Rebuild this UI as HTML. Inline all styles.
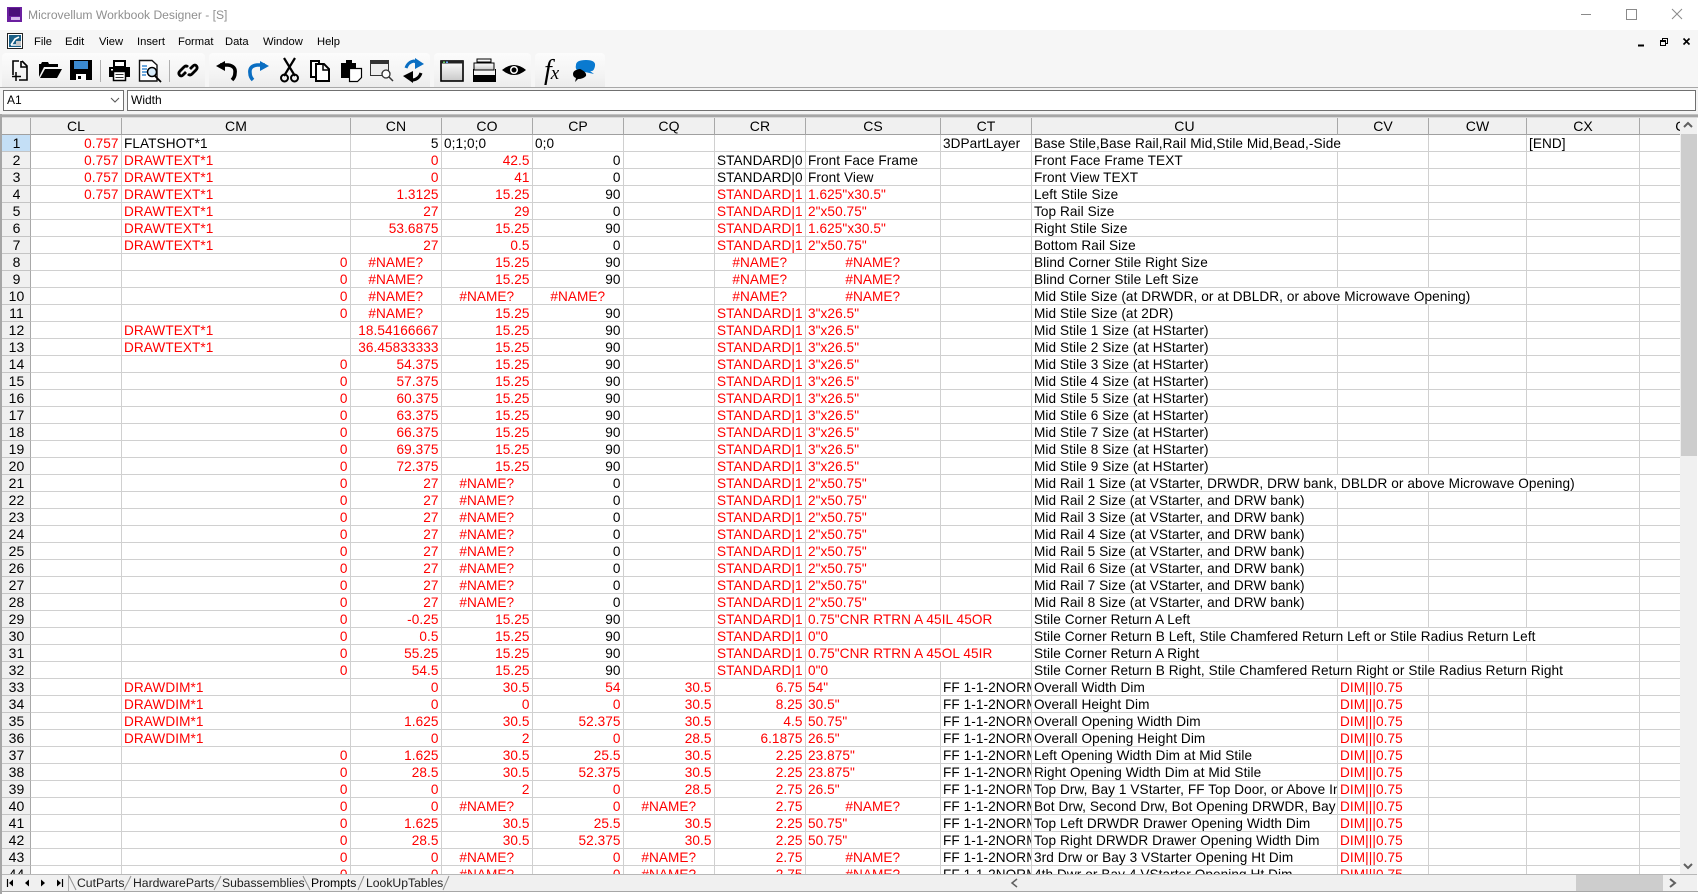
<!DOCTYPE html>
<html><head><meta charset="utf-8"><title>Microvellum Workbook Designer</title>
<style>
*{box-sizing:border-box}
html,body{margin:0;padding:0;width:1698px;height:894px;overflow:hidden;background:#fff;font-family:"Liberation Sans",Arial,sans-serif;color:#000}
.abs{position:absolute}
#title{left:28px;top:7px;font-size:12.1px;color:#8f8f8f;white-space:nowrap;line-height:16px}
#chrome{left:0;top:30px;width:1698px;height:58px;background:#f6f6f6;border-bottom:1px solid #a8a8a8}
.grp{position:absolute;top:23px;height:34px;border-radius:4px 4px 0 0;background:linear-gradient(#fcfcfc,#f4f4f4 60%,#ececec)}
.m{position:absolute;top:34px;font-size:11.2px;line-height:16px;color:#000;white-space:nowrap}
#fbar{left:0;top:88px;width:1698px;height:26px;background:#f4f4f4}
.box{position:absolute;top:90px;height:21px;background:#fff;border:1px solid #707070;font-size:12px;line-height:19px;padding-left:3px}
#gridwrap{left:2px;top:118px;width:1678px;height:756px;overflow:hidden;background:#fff}
#topline{left:0;top:114px;width:1698px;height:4px;background:#a6a6a6;border-bottom:1px solid #d8d8d8;border-top:1px solid #c0c0c0}
#leftline{left:0;top:114px;width:2px;height:780px;background:#a6a6a6}
table{border-collapse:separate;border-spacing:0;table-layout:fixed;width:1729px}
td,th{height:17px;padding:1px 2.5px 0 2px;border-right:1px solid #d0d0d0;border-bottom:1px solid #d0d0d0;font-size:13.6px;letter-spacing:.08px;font-weight:normal;line-height:15px;white-space:nowrap;overflow:hidden;text-align:left;color:#000}
th{background:#f0f0f0;border-right:1px solid #a8a8a8;border-bottom:1px solid #a0a0a0;text-align:center;font-size:14px;padding:0 3px;line-height:16px}
td:first-child{background:#f0f0f0;border-right:1px solid #a8a8a8;border-bottom:1px solid #c4c4c4;text-align:center;font-size:14px;padding:1px 0 0 1px}
td.s:first-child{background:#c4dff6}
td.r{color:#f00}
td.a{color:#f00;text-align:right}
td.c{color:#f00;text-align:center}
td.k{text-align:right}
#vbar{left:1680px;top:118px;width:17px;height:756px;background:#f0f0f0}
#vthumb{left:1681px;top:134px;width:16px;height:322px;background:#cdcdcd}
#hbar{left:2px;top:874px;width:1695px;height:17px;background:#f0f0f0;border-top:1px solid #b8b8b8}
#hthumb{left:1576px;top:875px;width:87px;height:16px;background:#cdcdcd}
#botline{left:0;top:891px;width:1698px;height:1px;background:#a6a6a6}
.t{position:absolute;top:875px;font-size:12.2px;line-height:16px;white-space:nowrap;color:#222}
</style></head><body>

<div class="abs" id="title">Microvellum Workbook Designer - [S]</div>
<div class="abs" id="chrome">
<div class="grp" style="left:2px;width:203px"></div>
<div class="grp" style="left:209px;width:221px"></div>
<div class="grp" style="left:434px;width:97px"></div>
<div class="grp" style="left:535px;width:70px"></div>
</div>
<span class="m" style="left:34px">File</span>
<span class="m" style="left:65px">Edit</span>
<span class="m" style="left:99px">View</span>
<span class="m" style="left:137px">Insert</span>
<span class="m" style="left:178px">Format</span>
<span class="m" style="left:225px">Data</span>
<span class="m" style="left:263px">Window</span>
<span class="m" style="left:317px">Help</span>

<div class="abs" id="fbar"></div>
<div class="box" style="left:3px;width:121px">A1</div>
<div class="box" style="left:127px;width:1569px">Width</div>

<div class="abs" id="topline"></div>
<div class="abs" id="gridwrap">
<table>
<colgroup><col style="width:29px"><col style="width:91px"><col style="width:229px"><col style="width:91px"><col style="width:91px"><col style="width:91px"><col style="width:91px"><col style="width:91px"><col style="width:135px"><col style="width:91px"><col style="width:306px"><col style="width:91px"><col style="width:98px"><col style="width:113px"><col style="width:91px"></colgroup>
<tr><th></th><th>CL</th><th>CM</th><th>CN</th><th>CO</th><th>CP</th><th>CQ</th><th>CR</th><th>CS</th><th>CT</th><th>CU</th><th>CV</th><th>CW</th><th>CX</th><th>CY</th></tr>
<tr><td class=s>1<td class=a>0.757<td>FLATSHOT*1<td class=k>5<td>0;1;0;0<td>0;0<td><td><td><td>3DPartLayer<td colspan=2>Base Stile,Base Rail,Rail Mid,Stile Mid,Bead,-Side<td><td>[END]<td></tr>
<tr><td>2<td class=a>0.757<td class=r>DRAWTEXT*1<td class=a>0<td class=a>42.5<td class=k>0<td><td>STANDARD|0<td>Front Face Frame<td><td>Front Face Frame TEXT<td><td><td><td></tr>
<tr><td>3<td class=a>0.757<td class=r>DRAWTEXT*1<td class=a>0<td class=a>41<td class=k>0<td><td>STANDARD|0<td>Front View<td><td>Front View TEXT<td><td><td><td></tr>
<tr><td>4<td class=a>0.757<td class=r>DRAWTEXT*1<td class=a>1.3125<td class=a>15.25<td class=k>90<td><td class=r>STANDARD|1<td class=r>1.625"x30.5"<td><td>Left Stile Size<td><td><td><td></tr>
<tr><td>5<td><td class=r>DRAWTEXT*1<td class=a>27<td class=a>29<td class=k>0<td><td class=r>STANDARD|1<td class=r>2"x50.75"<td><td>Top Rail Size<td><td><td><td></tr>
<tr><td>6<td><td class=r>DRAWTEXT*1<td class=a>53.6875<td class=a>15.25<td class=k>90<td><td class=r>STANDARD|1<td class=r>1.625"x30.5"<td><td>Right Stile Size<td><td><td><td></tr>
<tr><td>7<td><td class=r>DRAWTEXT*1<td class=a>27<td class=a>0.5<td class=k>0<td><td class=r>STANDARD|1<td class=r>2"x50.75"<td><td>Bottom Rail Size<td><td><td><td></tr>
<tr><td>8<td><td class=a>0<td class=c>#NAME?<td class=a>15.25<td class=k>90<td><td class=c>#NAME?<td class=c>#NAME?<td><td>Blind Corner Stile Right Size<td><td><td><td></tr>
<tr><td>9<td><td class=a>0<td class=c>#NAME?<td class=a>15.25<td class=k>90<td><td class=c>#NAME?<td class=c>#NAME?<td><td>Blind Corner Stile Left Size<td><td><td><td></tr>
<tr><td>10<td><td class=a>0<td class=c>#NAME?<td class=c>#NAME?<td class=c>#NAME?<td><td class=c>#NAME?<td class=c>#NAME?<td><td colspan=3>Mid Stile Size (at DRWDR, or at DBLDR, or above Microwave Opening)<td><td></tr>
<tr><td>11<td><td class=a>0<td class=c>#NAME?<td class=a>15.25<td class=k>90<td><td class=r>STANDARD|1<td class=r>3"x26.5"<td><td>Mid Stile Size (at 2DR)<td><td><td><td></tr>
<tr><td>12<td><td class=r>DRAWTEXT*1<td class=a>18.54166667<td class=a>15.25<td class=k>90<td><td class=r>STANDARD|1<td class=r>3"x26.5"<td><td>Mid Stile 1 Size (at HStarter)<td><td><td><td></tr>
<tr><td>13<td><td class=r>DRAWTEXT*1<td class=a>36.45833333<td class=a>15.25<td class=k>90<td><td class=r>STANDARD|1<td class=r>3"x26.5"<td><td>Mid Stile 2 Size (at HStarter)<td><td><td><td></tr>
<tr><td>14<td><td class=a>0<td class=a>54.375<td class=a>15.25<td class=k>90<td><td class=r>STANDARD|1<td class=r>3"x26.5"<td><td>Mid Stile 3 Size (at HStarter)<td><td><td><td></tr>
<tr><td>15<td><td class=a>0<td class=a>57.375<td class=a>15.25<td class=k>90<td><td class=r>STANDARD|1<td class=r>3"x26.5"<td><td>Mid Stile 4 Size (at HStarter)<td><td><td><td></tr>
<tr><td>16<td><td class=a>0<td class=a>60.375<td class=a>15.25<td class=k>90<td><td class=r>STANDARD|1<td class=r>3"x26.5"<td><td>Mid Stile 5 Size (at HStarter)<td><td><td><td></tr>
<tr><td>17<td><td class=a>0<td class=a>63.375<td class=a>15.25<td class=k>90<td><td class=r>STANDARD|1<td class=r>3"x26.5"<td><td>Mid Stile 6 Size (at HStarter)<td><td><td><td></tr>
<tr><td>18<td><td class=a>0<td class=a>66.375<td class=a>15.25<td class=k>90<td><td class=r>STANDARD|1<td class=r>3"x26.5"<td><td>Mid Stile 7 Size (at HStarter)<td><td><td><td></tr>
<tr><td>19<td><td class=a>0<td class=a>69.375<td class=a>15.25<td class=k>90<td><td class=r>STANDARD|1<td class=r>3"x26.5"<td><td>Mid Stile 8 Size (at HStarter)<td><td><td><td></tr>
<tr><td>20<td><td class=a>0<td class=a>72.375<td class=a>15.25<td class=k>90<td><td class=r>STANDARD|1<td class=r>3"x26.5"<td><td>Mid Stile 9 Size (at HStarter)<td><td><td><td></tr>
<tr><td>21<td><td class=a>0<td class=a>27<td class=c>#NAME?<td class=k>0<td><td class=r>STANDARD|1<td class=r>2"x50.75"<td><td colspan=4>Mid Rail 1 Size (at VStarter, DRWDR, DRW bank, DBLDR or above Microwave Opening)<td></tr>
<tr><td>22<td><td class=a>0<td class=a>27<td class=c>#NAME?<td class=k>0<td><td class=r>STANDARD|1<td class=r>2"x50.75"<td><td>Mid Rail 2 Size (at VStarter, and DRW bank)<td><td><td><td></tr>
<tr><td>23<td><td class=a>0<td class=a>27<td class=c>#NAME?<td class=k>0<td><td class=r>STANDARD|1<td class=r>2"x50.75"<td><td>Mid Rail 3 Size (at VStarter, and DRW bank)<td><td><td><td></tr>
<tr><td>24<td><td class=a>0<td class=a>27<td class=c>#NAME?<td class=k>0<td><td class=r>STANDARD|1<td class=r>2"x50.75"<td><td>Mid Rail 4 Size (at VStarter, and DRW bank)<td><td><td><td></tr>
<tr><td>25<td><td class=a>0<td class=a>27<td class=c>#NAME?<td class=k>0<td><td class=r>STANDARD|1<td class=r>2"x50.75"<td><td>Mid Rail 5 Size (at VStarter, and DRW bank)<td><td><td><td></tr>
<tr><td>26<td><td class=a>0<td class=a>27<td class=c>#NAME?<td class=k>0<td><td class=r>STANDARD|1<td class=r>2"x50.75"<td><td>Mid Rail 6 Size (at VStarter, and DRW bank)<td><td><td><td></tr>
<tr><td>27<td><td class=a>0<td class=a>27<td class=c>#NAME?<td class=k>0<td><td class=r>STANDARD|1<td class=r>2"x50.75"<td><td>Mid Rail 7 Size (at VStarter, and DRW bank)<td><td><td><td></tr>
<tr><td>28<td><td class=a>0<td class=a>27<td class=c>#NAME?<td class=k>0<td><td class=r>STANDARD|1<td class=r>2"x50.75"<td><td>Mid Rail 8 Size (at VStarter, and DRW bank)<td><td><td><td></tr>
<tr><td>29<td><td class=a>0<td class=a>-0.25<td class=a>15.25<td class=k>90<td><td class=r>STANDARD|1<td class=r colspan=2>0.75"CNR RTRN A 45IL 45OR<td>Stile Corner Return A Left<td><td><td><td></tr>
<tr><td>30<td><td class=a>0<td class=a>0.5<td class=a>15.25<td class=k>90<td><td class=r>STANDARD|1<td class=r>0"0<td><td colspan=4>Stile Corner Return B Left, Stile Chamfered Return Left or Stile Radius Return Left<td></tr>
<tr><td>31<td><td class=a>0<td class=a>55.25<td class=a>15.25<td class=k>90<td><td class=r>STANDARD|1<td class=r colspan=2>0.75"CNR RTRN A 45OL 45IR<td>Stile Corner Return A Right<td><td><td><td></tr>
<tr><td>32<td><td class=a>0<td class=a>54.5<td class=a>15.25<td class=k>90<td><td class=r>STANDARD|1<td class=r>0"0<td><td colspan=4>Stile Corner Return B Right, Stile Chamfered Return Right or Stile Radius Return Right<td></tr>
<tr><td>33<td><td class=r>DRAWDIM*1<td class=a>0<td class=a>30.5<td class=a>54<td class=a>30.5<td class=a>6.75<td class=r>54"<td>FF 1-1-2NORMAL<td>Overall Width Dim<td class=r>DIM|||0.75<td><td><td></tr>
<tr><td>34<td><td class=r>DRAWDIM*1<td class=a>0<td class=a>0<td class=a>0<td class=a>30.5<td class=a>8.25<td class=r>30.5"<td>FF 1-1-2NORMAL<td>Overall Height Dim<td class=r>DIM|||0.75<td><td><td></tr>
<tr><td>35<td><td class=r>DRAWDIM*1<td class=a>1.625<td class=a>30.5<td class=a>52.375<td class=a>30.5<td class=a>4.5<td class=r>50.75"<td>FF 1-1-2NORMAL<td>Overall Opening Width Dim<td class=r>DIM|||0.75<td><td><td></tr>
<tr><td>36<td><td class=r>DRAWDIM*1<td class=a>0<td class=a>2<td class=a>0<td class=a>28.5<td class=a>6.1875<td class=r>26.5"<td>FF 1-1-2NORMAL<td>Overall Opening Height Dim<td class=r>DIM|||0.75<td><td><td></tr>
<tr><td>37<td><td class=a>0<td class=a>1.625<td class=a>30.5<td class=a>25.5<td class=a>30.5<td class=a>2.25<td class=r>23.875"<td>FF 1-1-2NORMAL<td>Left Opening Width Dim at Mid Stile<td class=r>DIM|||0.75<td><td><td></tr>
<tr><td>38<td><td class=a>0<td class=a>28.5<td class=a>30.5<td class=a>52.375<td class=a>30.5<td class=a>2.25<td class=r>23.875"<td>FF 1-1-2NORMAL<td>Right Opening Width Dim at Mid Stile<td class=r>DIM|||0.75<td><td><td></tr>
<tr><td>39<td><td class=a>0<td class=a>0<td class=a>2<td class=a>0<td class=a>28.5<td class=a>2.75<td class=r>26.5"<td>FF 1-1-2NORMAL<td>Top Drw, Bay 1 VStarter, FF Top Door, or Above Interior<td class=r>DIM|||0.75<td><td><td></tr>
<tr><td>40<td><td class=a>0<td class=a>0<td class=c>#NAME?<td class=a>0<td class=c>#NAME?<td class=a>2.75<td class=c>#NAME?<td>FF 1-1-2NORMAL<td>Bot Drw, Second Drw, Bot Opening DRWDR, Bay 2 VStarter<td class=r>DIM|||0.75<td><td><td></tr>
<tr><td>41<td><td class=a>0<td class=a>1.625<td class=a>30.5<td class=a>25.5<td class=a>30.5<td class=a>2.25<td class=r>50.75"<td>FF 1-1-2NORMAL<td>Top Left DRWDR Drawer Opening Width Dim<td class=r>DIM|||0.75<td><td><td></tr>
<tr><td>42<td><td class=a>0<td class=a>28.5<td class=a>30.5<td class=a>52.375<td class=a>30.5<td class=a>2.25<td class=r>50.75"<td>FF 1-1-2NORMAL<td>Top Right DRWDR Drawer Opening Width Dim<td class=r>DIM|||0.75<td><td><td></tr>
<tr><td>43<td><td class=a>0<td class=a>0<td class=c>#NAME?<td class=a>0<td class=c>#NAME?<td class=a>2.75<td class=c>#NAME?<td>FF 1-1-2NORMAL<td>3rd Drw or Bay 3 VStarter Opening Ht Dim<td class=r>DIM|||0.75<td><td><td></tr>
<tr><td>44<td><td class=a>0<td class=a>0<td class=c>#NAME?<td class=a>0<td class=c>#NAME?<td class=a>2.75<td class=c>#NAME?<td>FF 1-1-2NORMAL<td>4th Dwr or Bay 4 VStarter Opening Ht Dim<td class=r>DIM|||0.75<td><td><td></tr>
</table>
</div>
<div class="abs" id="leftline"></div>
<div class="abs" id="vbar"></div>
<div class="abs" id="vthumb"></div>
<div class="abs" id="hbar"></div>
<div class="abs" id="hthumb"></div>
<div class="abs" id="botline"></div>

<span class="t" style="left:77px">CutParts</span>
<span class="t" style="left:133px">HardwareParts</span>
<span class="t" style="left:222px">Subassemblies</span>
<span class="t" style="left:311px;color:#000">Prompts</span>
<span class="t" style="left:366px">LookUpTables</span>

<svg class="abs" style="left:0;top:0" width="1698" height="894" viewBox="0 0 1698 894" fill="none">
<defs><linearGradient id="g" x1="0" y1="0" x2="0" y2="1"><stop offset="0" stop-color="#fff"/><stop offset="1" stop-color="#c8c8c8"/></linearGradient></defs>
<!-- app icon -->
<rect x="7" y="7" width="15" height="15" fill="#6b1fa0"/><rect x="9" y="8" width="11" height="8" fill="#4a0f78"/><rect x="11" y="17" width="9" height="3" fill="#d5b8ea"/>
<!-- window controls -->
<path d="M1581 14.5H1591" stroke="#8a8a8a"/><rect x="1626.5" y="9.5" width="10" height="10" stroke="#8a8a8a"/><path d="M1672 9L1682 19M1682 9L1672 19" stroke="#8a8a8a"/>
<!-- mdi icon -->
<rect x="7.5" y="33.5" width="15" height="15" fill="#fff" stroke="#222"/><rect x="9" y="35" width="12" height="12" fill="#1a5f86"/><path d="M11 45L15 39L19 37M11 45H21" stroke="#fff" stroke-width="1.6"/><rect x="16" y="41" width="5" height="5" fill="#c8c8c8"/>
<!-- mdi controls -->
<path d="M1638 45.5H1644" stroke="#000" stroke-width="2"/>
<path d="M1660.5 40.5H1665.5V45.5H1660.5ZM1662.5 40V38.5H1667.5V43.500H1666M1660.5 41.500H1665.500" stroke="#000"/>
<path d="M1683.500 38.500L1689.500 44.500M1689.500 38.500L1683.500 44.500" stroke="#000" stroke-width="1.6"/>
<!-- new -->
<path d="M19 61H13V75M22 61L27 66V80H19M21 61V67H27" stroke="#000" stroke-width="1.6"/><path d="M16 72V81M12 76.500H21" stroke="#000" stroke-width="1.5"/>
<!-- open -->
<path d="M39 77V64H41L42 62H48L49 64H58V67H44L39 77Z" fill="#000"/><path d="M40 78L45 69H62L57 78Z" fill="#000"/>
<!-- save -->
<path d="M70 60H92V80H70Z" fill="#000"/><rect x="74" y="61" width="14" height="8" fill="#3b8ad0"/><rect x="76" y="74" width="10" height="6" fill="#fff"/><rect x="78" y="76" width="3" height="3" fill="#000"/>
<path d="M100.500 60V82" stroke="#b0b0b0"/>
<!-- print -->
<rect x="114" y="61" width="11" height="6" fill="#fff" stroke="#000" stroke-width="2"/><path d="M109 67H130V77H109Z" fill="#000"/><rect x="113.500" y="71.500" width="12" height="9" fill="#fff" stroke="#000" stroke-width="1.500"/><path d="M115.500 74.500H123.500M115.500 77.500H123.500" stroke="#333"/><rect x="111" y="69" width="2" height="1.500" fill="#fff"/>
<!-- preview -->
<path d="M139.500 60.500H152L157 65V81H139.500Z" fill="#fff" stroke="#111" stroke-width="1.4"/><path d="M142 66H147M142 69H147M142 72H147M142 75H146" stroke="#3b8ad0" stroke-width="1.4"/><circle cx="152" cy="72" r="4.500" fill="#d8ecfa" stroke="#000" stroke-width="1.5"/><path d="M155 76L161 82" stroke="#000" stroke-width="1.8"/>
<path d="M169.500 60V82" stroke="#b0b0b0"/>
<!-- link -->
<path d="M186 72L183 75Q181 77 179.500 75Q178 73 180 71L184 67Q186 65 188 67M190 69L193 66Q195 64 196.500 66Q198 68 196 70L192 74Q190 76 188 74" stroke="#000" stroke-width="2.800"/>
<!-- undo -->
<path d="M220 65H228Q236 66 235 73Q235 77 232 80" stroke="#000" stroke-width="3.600"/><path d="M216 66L225 61V71Z" fill="#000"/>
<!-- redo -->
<path d="M265 65H257Q249 66 250 73Q250 77 253 80" stroke="#0a6ec2" stroke-width="3.600"/><path d="M269 66L260 61V71Z" fill="#0a6ec2"/>
<!-- cut -->
<path d="M284 58L295 76M295 58L284 76" stroke="#000" stroke-width="2.200"/><circle cx="284.500" cy="78" r="3.500" stroke="#000" stroke-width="2"/><circle cx="294.500" cy="78" r="3.500" stroke="#000" stroke-width="2"/>
<!-- copy -->
<path d="M311 61H319V77H311Z" fill="#fff" stroke="#000" stroke-width="2"/><path d="M316 64H324L329 69V81H316Z" fill="#fff" stroke="#000" stroke-width="2"/><path d="M323 64V70H329" stroke="#000" stroke-width="1.500"/>
<!-- paste -->
<path d="M341 63H346V60H352V63H356V78H341Z" fill="#000"/><path d="M349.500 68.500H361.500V77.500L357.500 81.500H349.500Z" fill="#fff" stroke="#000" stroke-width="1.200"/>
<!-- find window -->
<rect x="370.500" y="60.500" width="18" height="15" fill="#eee" stroke="#333"/><rect x="371" y="61" width="17" height="3" fill="#333"/><circle cx="386" cy="74" r="4" fill="#fff" stroke="#333" stroke-width="1.300"/><path d="M389 77L393 81" stroke="#333" stroke-width="1.500"/>
<!-- refresh -->
<path d="M406 68Q408 62 414 61L420 64" stroke="#0a6ec2" stroke-width="3"/><path d="M415 58L424 64L415 69Z" fill="#0a6ec2"/><path d="M421 73Q419 79 413 80L407 76" stroke="#000" stroke-width="3"/><path d="M413 83L403 76L413 71Z" fill="#000"/>
<!-- window -->
<rect x="441" y="61" width="22" height="20" fill="url(#g)" stroke="#000" stroke-width="1.600"/><rect x="441" y="61" width="22" height="2.500" fill="#222"/><rect x="443" y="61.500" width="2" height="1.500" fill="#6c6"/><rect x="446" y="61.500" width="2" height="1.500" fill="#6af"/>
<!-- stack -->
<path d="M477 59H491V62H477Z" stroke="#000"/><path d="M474 63H494V70H474Z" fill="url(#g)" stroke="#000"/><path d="M473.500 69V75M495.500 69V75" stroke="#000"/><rect x="473" y="75" width="23" height="7" fill="#000"/>
<!-- eye -->
<path d="M502 70Q514 60 526 70Q514 80 502 70Z" fill="#000"/><circle cx="514" cy="70" r="4" fill="#fff"/><circle cx="514" cy="70" r="2.500" fill="#000"/>
<!-- chat -->
<path d="M576 65Q576 60 586 60Q596 60 595 66Q594 72 590 71L594 74L585 72Q574 72 576 65Z" fill="#0a7ad0"/><path d="M573 74Q573 70 580 69Q587 72 586 76Q583 79 578 79L575 82L576 78Q573 77 573 74Z" fill="#000"/>
<!-- name chevron -->
<path d="M111 98L115 102L119 98" stroke="#555"/>
<!-- scroll arrows -->
<path d="M1684 127L1688 123L1692 127" stroke="#606060" stroke-width="2"/>
<path d="M1684 864L1688 868L1692 864" stroke="#606060" stroke-width="2"/>
<path d="M1670 879L1675 883L1670 887" stroke="#606060" stroke-width="2"/>
<path d="M1017 879L1012 883L1017 887" stroke="#606060" stroke-width="1.500"/>
<!-- tab nav -->
<path d="M7.500 879V887" stroke="#000" stroke-width="1.200"/><path d="M13 879.500V886.500L9 883Z" fill="#000"/>
<path d="M29 879.500V886.500L25 883Z" fill="#000"/>
<path d="M41 879.500V886.500L45 883Z" fill="#000"/>
<path d="M57 879.500V886.500L61 883Z" fill="#000"/><path d="M62.500 879V887" stroke="#000" stroke-width="1.200"/>
<path d="M68.500 875V891" stroke="#b0b0b0"/>
<path d="M69 876L76 890M124 890L131 876M214 890L221 876M303 876L310 890M358 890L364 876M443 890L449 876" stroke="#909090"/>
</svg>
<span class="abs" style="left:544px;top:56px;font:italic 28px 'Liberation Serif',serif;letter-spacing:-1px;line-height:30px">f<span style="font-size:19px">x</span></span>
</body></html>
